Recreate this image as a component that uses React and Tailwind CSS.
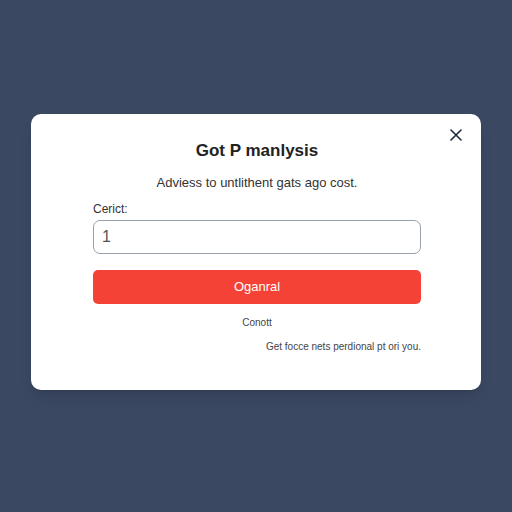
import React, { useState } from "react";

const Dialog = () => {
  const [value, setValue] = useState("1");

  return (
    <div className="relative w-[450px] h-[276px] bg-white rounded-[10px] shadow-lg pt-[26px] pl-[62px] pr-[60px]">
      <button className="absolute top-[13px] right-[17px] w-[16px] h-[16px] flex items-center justify-center text-gray-800">
        <svg width="12" height="12" viewBox="0 0 12 12" fill="none" stroke="currentColor" strokeWidth="1.6" strokeLinecap="round">
          <path d="M1 1 L11 11 M11 1 L1 11" />
        </svg>
      </button>
      <h2 className="text-center text-[17px] font-bold text-[#222] leading-[22px]">
        Got P manlysis
      </h2>
      <p className="text-center text-[13px] text-[#333] mt-[12px] leading-[18px]">
        Adviess to untlithent gats ago cost.
      </p>
      <label className="block text-[12px] text-[#333] mt-[9px] leading-[16px]">Cerict:</label>
      <input
        value={value}
        onChange={(e) => setValue(e.target.value)}
        className="block w-full h-[34px] mt-[3px] px-[8px] rounded-[7px] border border-gray-400 outline-none text-[16px] font-light text-[#555]"
      />
      <button className="block w-full h-[34px] mt-[16px] rounded-[5px] bg-[#f44336] text-white text-[13px]">
        Oganral
      </button>
      <div className="text-center text-[10px] text-[#444] mt-[12px] leading-[14px]">Conott</div>
      <div className="text-right text-[10px] text-[#444] mt-[10px] leading-[14px]">
        Get focce nets perdional pt ori you.
      </div>
    </div>
  );
};

const App = () => {
  return (
    <div
      className="w-[512px] h-[512px] bg-[#3b4862] flex items-center justify-center"
      style={{ fontFamily: "'Liberation Sans', Arial, sans-serif" }}
    >
      <div className="mt-[-8px]">
        <Dialog />
      </div>
    </div>
  );
};

export default App;
